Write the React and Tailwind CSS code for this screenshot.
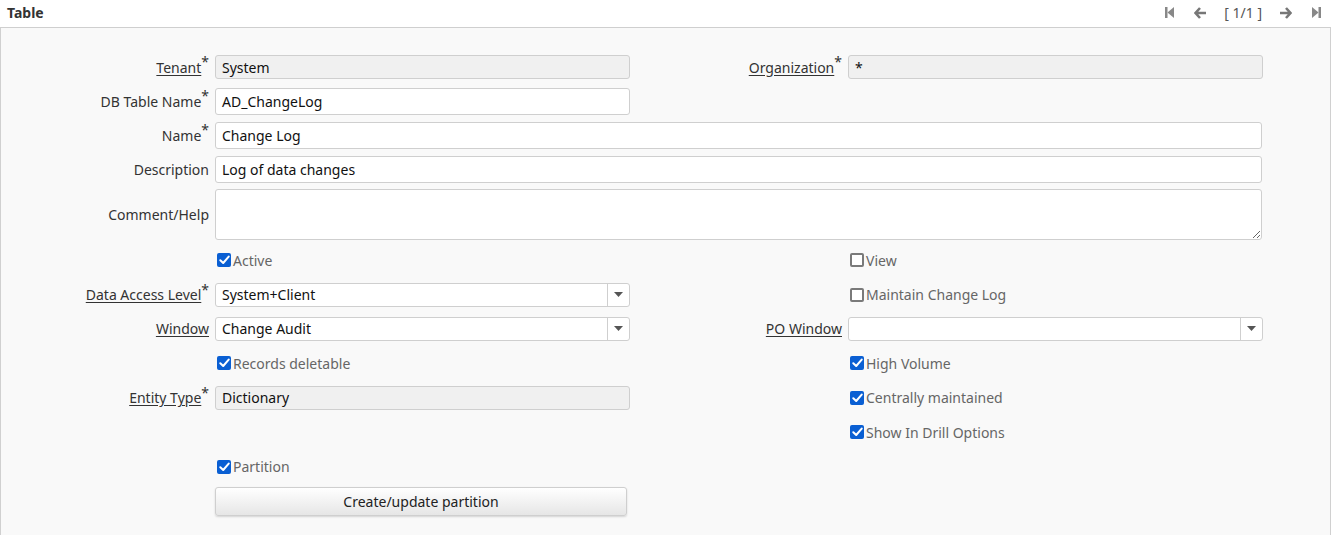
import React from "react";

const F = { fontFamily: '"Noto Sans", "Open Sans", sans-serif' };

function Label({ children, u, req }) {
  return (
    <div className="flex items-center justify-end pr-[6px] text-[14px] text-[#333]">
      <span className={u ? "underline underline-offset-2" : ""}>{children}</span>
      {req && <span className="relative -top-[5px] text-[14px] leading-none">*</span>}
    </div>
  );
}

function Box({ value, ro, h = "h-[24px]", cls = "" }) {
  return (
    <div
      className={`flex items-center ${h} rounded-[3px] border border-[#cfcfcf] pl-[6px] text-[14px] text-[#111] ${
        ro ? "bg-[#f0f0f0]" : "bg-white"
      } ${cls}`}
    >
      {value}
    </div>
  );
}

function Select({ value }) {
  return (
    <div className="flex h-[24px] items-stretch rounded-[3px] border border-[#cfcfcf] bg-white text-[14px] text-[#111]">
      <div className="flex flex-1 items-center pl-[6px]">{value}</div>
      <div className="flex w-[22px] items-center justify-center border-l border-[#cfcfcf]">
        <svg width="9" height="5" viewBox="0 0 9 5">
          <path d="M0 0 H9 L4.5 5 Z" fill="#555" />
        </svg>
      </div>
    </div>
  );
}

function Check({ label, on }) {
  return (
    <div className="flex items-center pl-[2px] text-[14px] text-[#666]">
      {on ? (
        <span className="flex h-[14px] w-[14px] items-center justify-center rounded-[2px] bg-[#0a5fd3]">
          <svg width="11" height="10" viewBox="0 0 11 10">
            <path d="M1.3 5.2 L4.2 8 L9.7 1.6" stroke="white" strokeWidth="2" fill="none" strokeLinecap="round" strokeLinejoin="round" />
          </svg>
        </span>
      ) : (
        <span className="h-[14px] w-[14px] rounded-[2px] border-2 border-[#7a7a7a] bg-white" />
      )}
      <span className="ml-[2px]">{label}</span>
    </div>
  );
}

const E = () => <div />;

export default function App() {
  return (
    <div style={F} className="h-[535px] w-[1331px] overflow-hidden bg-[#f9f9f9]">
      <div className="flex h-[28px] items-center justify-between border-b border-[#cfcfcf] bg-white pb-[2px] pl-[7px] pr-[10px]">
        <span className="text-[14px] font-bold text-[#333]">Table</span>
        <div className="flex items-center text-[#777]">
          <svg width="10" height="11" viewBox="0 0 10 11" className="mr-[19px]">
            <rect x="0" y="0" width="2.5" height="11" fill="#888" />
            <path d="M9 0 V11 L2.5 5.5 Z" fill="#888" />
          </svg>
          <svg width="13" height="12" viewBox="0 0 13 12" className="mr-[17px]">
            <path d="M6 1 L1.5 6 L6 11 M1.8 6 H12" stroke="#777" strokeWidth="2.6" fill="none" strokeLinejoin="miter" />
          </svg>
          <span className="mr-[17px] text-[14px] text-[#555]">[ 1/1 ]</span>
          <svg width="13" height="12" viewBox="0 0 13 12" className="mr-[19px]">
            <path d="M7 1 L11.5 6 L7 11 M11.2 6 H1" stroke="#777" strokeWidth="2.6" fill="none" strokeLinejoin="miter" />
          </svg>
          <svg width="10" height="11" viewBox="0 0 10 11">
            <path d="M1 0 V11 L7.5 5.5 Z" fill="#888" />
            <rect x="7.5" y="0" width="2.5" height="11" fill="#888" />
          </svg>
        </div>
      </div>
      <div className="h-[507px] border-x border-[#d0d0d0] pt-[22px]">
        <div className="grid grid-cols-[214px_415px_218px_415px] auto-rows-[34px]">
          {/* row 1 */}
          <Label u req>Tenant</Label>
          <div className="flex items-center"><div className="w-full"><Box ro value="System" /></div></div>
          <Label u req>Organization</Label>
          <div className="flex items-center"><div className="w-full"><Box ro value="*" /></div></div>
          {/* row 2 */}
          <Label req>DB Table Name</Label>
          <div className="flex items-center"><div className="w-full"><Box value="AD_ChangeLog" h="h-[27px]" /></div></div>
          <E /><E />
          {/* row 3 */}
          <Label req>Name</Label>
          <div className="col-span-3 flex items-center pr-[1px]"><div className="w-full"><Box value="Change Log" h="h-[27px]" /></div></div>
          {/* row 4 */}
          <Label>Description</Label>
          <div className="col-span-3 flex items-center pr-[1px]"><div className="w-full"><Box value="Log of data changes" h="h-[27px]" /></div></div>
          {/* row 5 */}
          <div className="h-[56px]"><div className="flex h-full items-center"><div className="w-full"><Label>Comment/Help</Label></div></div></div>
          <div className="col-span-3 h-[56px] pr-[1px] pt-[3px]">
            <textarea className="block h-[51px] w-full resize rounded-[3px] border border-[#cfcfcf] bg-white outline-none" />
          </div>
        </div>
        <div className="mt-[23px] grid grid-cols-[214px_415px_218px_415px] auto-rows-[34.4px]">
          {/* Active / View */}
          <E />
          <Check on label="Active" />
          <E />
          <Check label="View" />
          {/* Data access */}
          <Label u req>Data Access Level</Label>
          <div className="flex items-center"><div className="w-full"><Select value="System+Client" /></div></div>
          <E />
          <Check label="Maintain Change Log" />
          {/* Window */}
          <Label u>Window</Label>
          <div className="flex items-center"><div className="w-full"><Select value="Change Audit" /></div></div>
          <Label u>PO Window</Label>
          <div className="flex items-center"><div className="w-full"><Select value="" /></div></div>
          {/* Records deletable */}
          <E />
          <Check on label="Records deletable" />
          <E />
          <Check on label="High Volume" />
          {/* Entity type */}
          <Label u req>Entity Type</Label>
          <div className="flex items-center"><div className="w-full"><Box ro value="Dictionary" /></div></div>
          <E />
          <Check on label="Centrally maintained" />
          {/* empty */}
          <E /><E /><E />
          <Check on label="Show In Drill Options" />
          {/* partition */}
          <E />
          <Check on label="Partition" />
          <E /><E />
          {/* button */}
          <E />
          <div className="flex items-center pr-[3px] pt-[2px]">
            <button className="h-[29px] w-full rounded-[3px] border border-[#cfcfcf] bg-gradient-to-b from-white to-[#e6e6e6] text-[14px] text-[#222] shadow-[0_1px_2px_rgba(0,0,0,0.15)]">
              Create/update partition
            </button>
          </div>
          <E /><E />
        </div>
      </div>
    </div>
  );
}
